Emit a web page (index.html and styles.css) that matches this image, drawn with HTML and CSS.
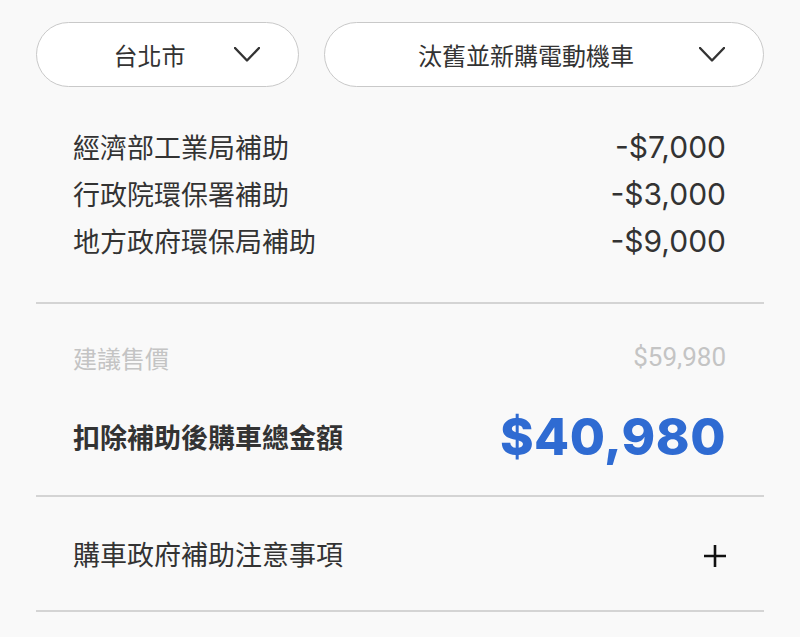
FILE: index.html
```html
<!DOCTYPE html>
<html lang="zh-Hant">
<head>
<meta charset="utf-8">
<link rel="stylesheet" href="styles.css">
</head>
<body>
<div class="page">
  <div class="selectors">
    <div class="pill pill-city">
      <span class="pill-text">台北市</span>
      <svg class="chev" width="26" height="15" viewBox="0 0 26 15"><polyline points="1,1 13,13.5 25,1" fill="none" stroke="#333" stroke-width="2.4" stroke-linecap="round" stroke-linejoin="round"/></svg>
    </div>
    <div class="pill pill-type">
      <span class="pill-text">汰舊並新購電動機車</span>
      <svg class="chev" width="26" height="15" viewBox="0 0 26 15"><polyline points="1,1 13,13.5 25,1" fill="none" stroke="#333" stroke-width="2.4" stroke-linecap="round" stroke-linejoin="round"/></svg>
    </div>
  </div>

  <div class="subsidies">
    <div class="row"><span class="label">經濟部工業局補助</span><span class="amount">-$7,000</span></div>
    <div class="row"><span class="label">行政院環保署補助</span><span class="amount">-$3,000</span></div>
    <div class="row"><span class="label">地方政府環保局補助</span><span class="amount">-$9,000</span></div>
  </div>

  <div class="summary">
    <div class="row msrp"><span class="label">建議售價</span><span class="price">$59,980</span></div>
    <div class="row total"><span class="label">扣除補助後購車總金額</span><span class="total-price">$40,980</span></div>
  </div>

  <div class="accordion">
    <span class="label">購車政府補助注意事項</span>
    <svg class="plus" width="22" height="22" viewBox="0 0 22 22"><path d="M11 0V22M0 11H22" stroke="#111" stroke-width="2.6"/></svg>
  </div>
</div>
</body>
</html>
```
FILE: styles.css
```css
html, body {
  margin: 0;
  padding: 0;
  background: #f9f9f9;
}
body {
  font-family: "Noto Sans CJK TC", "Noto Sans", sans-serif;
  color: #333;
}
.page {
  width: 728px;
  padding: 22px 36px 0;
}
.selectors {
  display: flex;
  gap: 25px;
}
.pill {
  box-sizing: border-box;
  height: 65px;
  border: 1.5px solid #c9c9c9;
  border-radius: 33px;
  background: #fff;
  display: flex;
  align-items: center;
  gap: 8px;
  padding: 0 38px 0 36px;
}
.pill-city { width: 263px; }
.pill-type { flex: 1; }
.pill-text {
  flex: 1;
  text-align: center;
  font-size: 24px;
  color: #333;
  font-weight: 400;
}
.chev { flex: none; }

.subsidies {
  margin-top: 36px;
  padding: 0 38px 0 37px;
  border-bottom: 2px solid #d4d4d4;
  padding-bottom: 38px;
}
.row {
  display: flex;
  justify-content: space-between;
  align-items: center;
}
.subsidies .row {
  height: 47px;
}
.subsidies .label {
  font-size: 27px;
  color: #333;
}
.amount {
  font-family: Inter, "Liberation Sans", sans-serif;
  font-size: 30px;
  color: #333;
}

.summary {
  padding: 33px 38px 29px 37px;
  border-bottom: 2px solid #d4d4d4;
}
.msrp {
  height: 40px;
  margin-bottom: 29px;
}
.msrp .label {
  font-size: 24px;
  color: #c4c4c4;
}
.price {
  font-family: Roboto, "Liberation Sans", sans-serif;
  font-size: 26px;
  color: #c4c4c4;
}
.total {
  height: 60px;
}
.total .label {
  font-size: 27px;
  font-weight: 700;
  color: #333;
}
.total-price {
  font-family: Inter, "Liberation Sans", sans-serif;
  font-weight: 800;
  font-size: 51px;
  color: #2f6bd2;
  letter-spacing: 0.5px;
}

.accordion {
  height: 113px;
  display: flex;
  align-items: center;
  justify-content: space-between;
  padding: 0 38px 0 37px;
  border-bottom: 2px solid #d4d4d4;
}
.accordion .label {
  font-size: 27px;
  color: #333;
}
.plus { flex: none; margin-top: 4px; }
```
